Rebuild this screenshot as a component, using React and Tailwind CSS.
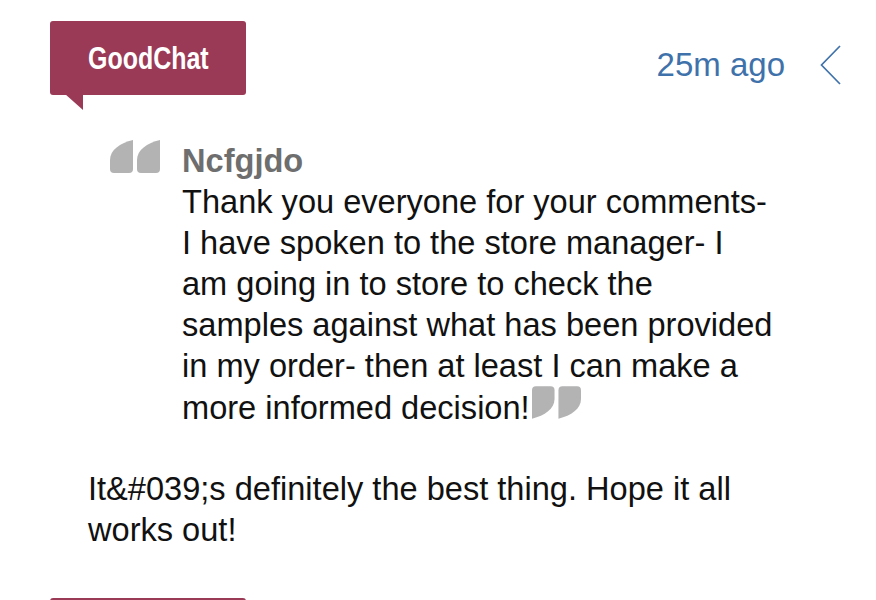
import React from "react";

const OpenQuote = ({ className }) => (
  <svg viewBox="0 0 50 33" className={className} fill="currentColor">
    <path d="M4 33 H19 Q23 33 23 29 V0 C10 3 0 10 0 20 V29 Q0 33 4 33 Z" />
    <path d="M31 33 H46 Q50 33 50 29 V0 C37 3 27 10 27 20 V29 Q27 33 31 33 Z" />
  </svg>
);

const CloseQuote = ({ className }) => (
  <svg viewBox="0 0 50 33" className={className} fill="currentColor">
    <g transform="rotate(180 25 16.5)">
      <path d="M4 33 H19 Q23 33 23 29 V0 C10 3 0 10 0 20 V29 Q0 33 4 33 Z" />
      <path d="M31 33 H46 Q50 33 50 29 V0 C37 3 27 10 27 20 V29 Q27 33 31 33 Z" />
    </g>
  </svg>
);

function Badge() {
  return (
    <div className="relative h-[74px] w-[196px]">
      <div className="flex h-full w-full items-center justify-center rounded-[3px] bg-[#9b3a57]">
        <span className="inline-block scale-x-[0.78] font-['Liberation_Sans',Arial,sans-serif] text-[32px] font-bold leading-none text-white">
          GoodChat
        </span>
      </div>
      <svg className="absolute left-[15px] top-[73px]" width="19" height="17" viewBox="0 0 19 17">
        <path d="M0 0 H18 V16 Z" fill="#9b3a57" />
      </svg>
    </div>
  );
}

export default function App() {
  return (
    <div className="h-[600px] w-[876px] overflow-hidden bg-white font-['Liberation_Sans',Arial,sans-serif] text-[32.6px] leading-[41px] text-[#111]">
      <div className="pl-[50px] pr-[34px] pt-[21px]">
        <div className="flex items-start justify-between">
          <Badge />
          <div className="mt-[23px] flex items-center text-[#3f72aa]">
            <span className="text-[33px]">25m ago</span>
            <svg className="ml-[35px]" width="22" height="40" viewBox="0 0 22 40" fill="none">
              <polyline points="20,1 1.5,20 20,39" stroke="#3f72aa" strokeWidth="1.7" />
            </svg>
          </div>
        </div>

        <div className="mt-[45px] flex">
          <div className="w-[132px] shrink-0 pl-[60px]">
            <OpenQuote className="h-[33px] w-[50px] text-[#b3b3b3]" />
          </div>
          <div>
            <div className="font-bold text-[#6e6e6e]">Ncfgjdo</div>
            <p>
              Thank you everyone for your comments-
              <br />I have spoken to the store manager- I
              <br />am going in to store to check the
              <br />samples against what has been provided
              <br />in my order- then at least I can make a
              <br />more informed decision!
              <CloseQuote className="ml-[2px] inline-block h-[33px] w-[49px] align-baseline text-[#b3b3b3]" />
            </p>
          </div>
        </div>

        <p className="mt-[40px] pl-[38px]">
          It&amp;#039;s definitely the best thing. Hope it all
          <br />
          works out!
        </p>

        <div className="mt-[48px] h-[74px] w-[196px] rounded-[3px] bg-[#9b3a57]" />
      </div>
    </div>
  );
}
